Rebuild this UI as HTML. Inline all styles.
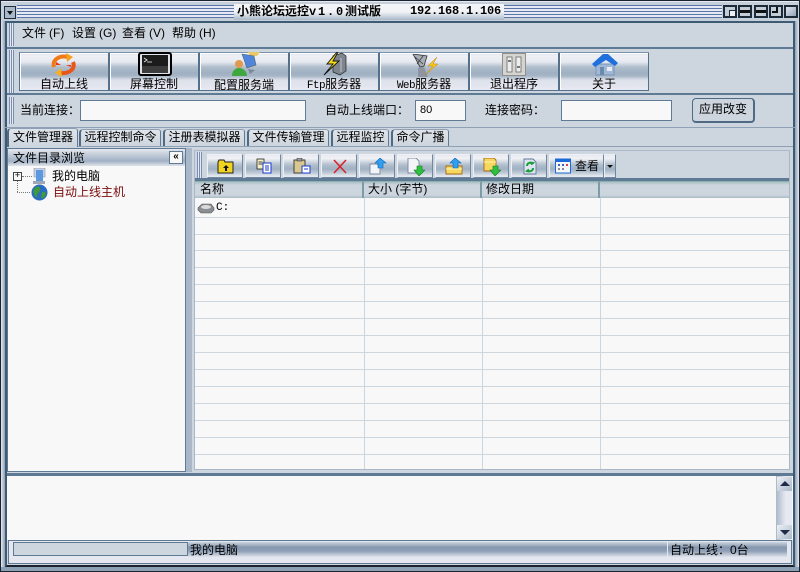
<!DOCTYPE html>
<html><head><meta charset="utf-8"><style>
html,body{margin:0;padding:0;width:800px;height:572px;overflow:hidden;background:#cdd5de}
*{box-sizing:border-box}
body{font:12px/14px "WenQuanYi Zen Hei","Liberation Sans","Noto Sans CJK SC",sans-serif;color:#000;position:relative}
.a{position:absolute}
.t{position:absolute;white-space:nowrap;font-size:12px;line-height:14px}
.btn{position:absolute;top:52px;width:90px;height:39px;background:linear-gradient(#dfe3ec 0,#eef0f6 3px,#e6e9f0 9px,#b0becc 14px,#9fb0c2 20px,#a6b6c6 23px,#dce1ea 27px,#e6e8f2 100%);text-align:center;border:1px solid #54708a;border-left-color:#e6e9f0;border-top-color:#e6e9f0;box-shadow:inset 1px 1px 0 #fff}
.btn::before{content:"";position:absolute;left:-1px;top:-1px;right:-1px;bottom:-1px;border-left:1px solid #54708a;border-top:1px solid #7d93a9}
.btn span{position:absolute;left:0;right:0;top:24px;line-height:14px}
.sb{position:absolute;top:154px;width:36px;height:24px;background:linear-gradient(#e6e8f0 0,#f0f2f6 3px,#e2e6ec 5px,#b0becc 10px,#a0b1c3 14px,#c0ccd8 18px,#e4e7ee 21px);border:1px solid #6f87a0;border-left-color:#eef0f6;border-top-color:#eef0f6}
.sb svg{position:absolute;left:9px;top:3px}
.inp{position:absolute;background:#f8f8f8;border:1px solid #5e7a94}
.tab{position:absolute;top:129px;height:17px;background:linear-gradient(#e0e4ea,#cdd5de);border-left:2px solid #4e6a84;border-top:1px solid #8ea0b4;border-right:1px solid #5e7a94;border-radius:4px 3px 0 0;text-align:center;line-height:15px;white-space:nowrap}
.hd{position:absolute;top:181px;height:17px;background:linear-gradient(#a9c0c4,#cdd5de 3px,#cdd5de 13px,#a9bcc4);border-right:2px solid #7d9ca6;border-top:1px solid #8fb0b0;line-height:15px;padding-left:5px}
.grip{position:absolute;width:3px;background:repeating-linear-gradient(90deg,#7a8fb0 0 1px,#e6e8f2 1px 2px)}
.h{position:absolute;left:195px;width:594px;height:1px;background:#ccd6de}
.v{position:absolute;top:198px;width:1px;height:271px;background:#ccd6de}
.wb{position:absolute;top:5px;width:14px;height:13px;border:2px solid #1d2a38;background:#c3cdd8}
</style></head><body>
<!-- outer frame -->
<div class="a" style="left:0;top:0;width:800px;height:572px;border:1px solid #1a2430;background:#a9b8c8"></div>
<div class="a" style="left:1px;top:1px;width:798px;height:20px;background:#c5cfda;border-top:1px solid #e6e8f2"></div>
<!-- title stripes -->
<div class="a" style="left:17px;top:5px;width:217px;height:13px;background:repeating-linear-gradient(#5a76a8 0 1px,#e6e8f4 1px 3px)"></div>
<div class="a" style="left:504px;top:5px;width:218px;height:13px;background:repeating-linear-gradient(#5a76a8 0 1px,#e6e8f4 1px 3px)"></div>
<div class="a" style="left:234px;top:4px;width:270px;height:16px;background:linear-gradient(#f4f5f8,#f0f2f6 50%,#a9b8c8)"></div>
<div class="t" style="left:237px;top:4px;font-weight:bold">小熊论坛远控<span style="font-family:'Liberation Mono',monospace;letter-spacing:1.8px">v1.0</span>测试版</div>
<div class="t" style="left:410px;top:4px;font-family:'Liberation Mono',monospace;font-weight:bold;font-size:12px;letter-spacing:-.2px">192.168.1.106</div>
<div class="wb" style="left:4px;top:6px;width:12px;height:13px;background:#a9b8c8;border-width:1px"><div class="a" style="left:2px;top:4px;border:3px solid transparent;border-top:4px solid #111;border-bottom:0"></div></div>
<div class="wb" style="left:723px"><div class="a" style="left:4px;top:3px;width:6px;height:6px;background:#eef0f4;border:1px solid #1d2a38;border-right:0;border-bottom:0"></div></div>
<div class="wb" style="left:738px"><div class="a" style="left:0;top:3px;width:10px;height:3px;border-top:2px solid #111;border-bottom:1px solid #111"></div></div>
<div class="wb" style="left:754px"><div class="a" style="left:0;top:3px;width:10px;height:3px;border-top:2px solid #111;border-bottom:1px solid #111"></div></div>
<div class="wb" style="left:769px"><div class="a" style="left:1px;top:0;width:6px;height:6px;border:2px solid #111;border-top:0;border-left:0"></div></div>
<div class="wb" style="left:784px;background:linear-gradient(135deg,#e6e8f2,#8fa2b6)"></div>
<!-- main frame -->
<div class="a" style="left:5px;top:21px;width:790px;height:546px;border:2px solid #3f5a73;border-bottom-color:#1a2430;background:#cdd5de"></div>
<!-- side edges -->
<div class="a" style="left:1px;top:21px;width:4px;height:547px;background:linear-gradient(90deg,#e6e8f2,#8ea0b4)"></div>
<div class="a" style="left:795px;top:21px;width:4px;height:547px;background:linear-gradient(90deg,#8ea0b4,#e6e8f2)"></div>
<div class="a" style="left:1px;top:567px;width:798px;height:4px;background:#8ea0b4"></div>
<!-- menu -->
<div class="grip" style="left:9px;top:23px;height:23px;width:5px"></div>
<div class="t" style="left:22px;top:26px">文件</div><div class="t" style="left:49px;top:26px">(F)</div>
<div class="t" style="left:72px;top:26px">设置</div><div class="t" style="left:99px;top:26px">(G)</div>
<div class="t" style="left:122px;top:26px">查看</div><div class="t" style="left:149px;top:26px">(V)</div>
<div class="t" style="left:172px;top:26px">帮助</div><div class="t" style="left:199px;top:26px">(H)</div>
<div class="a" style="left:7px;top:47px;width:786px;height:2px;background:#5e7a94"></div>
<!-- toolbar -->
<div class="grip" style="left:9px;top:50px;height:43px;width:5px"></div>
<div class="btn" style="left:19px"><span>自动上线</span>
<svg class="a" style="left:31px;top:0" width="26" height="24" viewBox="0 0 26 24"><path d="M3 14C1 7 8 2 17 4" fill="none" stroke="#f07a18" stroke-width="4"/><path d="M15 0l7 4-6 5z" fill="#f6a020"/><path d="M22 9c3 7-4 12-13 11" fill="none" stroke="#e8561a" stroke-width="4"/><path d="M11 24l-7-4 6-5z" fill="#f6b020"/><path d="M5 9l5 3H5zM20 14l-5-2h5z" fill="#e83a18"/></svg></div>
<div class="btn" style="left:109px"><span>屏幕控制</span>
<svg class="a" style="left:28px;top:-1px" width="34" height="24" viewBox="0 0 34 24"><rect x="1" y="1" width="32" height="22" rx="2" fill="#dfe2e8" stroke="#000" stroke-width="2"/><rect x="4" y="3" width="26" height="18" fill="#1c1c1c"/><rect x="4" y="14" width="26" height="7" fill="#3c3c3c"/><path d="M6 6l3 2-3 2" stroke="#ddd" fill="none"/><path d="M9 10h5" stroke="#bbb"/></svg></div>
<div class="btn" style="left:199px"><span style="top:25px">配置服务端</span>
<svg class="a" style="left:31px;top:-1px" width="30" height="25" viewBox="0 0 30 25"><path d="M17 0h12l-3 4H19z" fill="#e8c868"/><path d="M11 2l12 2 2 9-9 3z" fill="#4f86dc" stroke="#566" stroke-width=".6"/><path d="M17 17l7 1-5 4z" fill="#7a8898"/><circle cx="8" cy="12" r="4" fill="#e09a50"/><path d="M1 24c0-5 3-8 7-8s8 3 8 8z" fill="#3ea83e"/></svg></div>
<div class="btn" style="left:289px"><span><span style="position:static;font:11px 'Liberation Mono',monospace;letter-spacing:-.5px">Ftp</span>服务器</span>
<svg class="a" style="left:33px;top:-1px" width="24" height="24" viewBox="0 0 24 24"><path d="M10 4l9-3 4 3v15l-6 4-7-3z" fill="#7f858e" stroke="#222" stroke-width=".7"/><path d="M18 6v14" stroke="#c0c4ca"/><path d="M14 0L4 12h6L1 23 16 9h-6l5-9z" fill="#f8dc18" stroke="#111" stroke-width=".9"/></svg></div>
<div class="btn" style="left:379px"><span><span style="position:static;font:11px 'Liberation Mono',monospace;letter-spacing:-.5px">Web</span>服务器</span>
<svg class="a" style="left:32px;top:1px" width="26" height="24" viewBox="0 0 26 24"><path d="M1 0l14 2-3 10-4 1z" fill="#a8aeb6" stroke="#333" stroke-width=".8"/><path d="M3 3l8 7M11 2l-6 8" stroke="#333" stroke-width=".7"/><path d="M6 14l6-1 4 10H6z" fill="#8d95a0"/><path d="M25 3l-9 9h5l-8 9 13-11h-5z" fill="#f8c818" stroke="#c08020" stroke-width=".5"/></svg></div>
<div class="btn" style="left:469px"><span>退出程序</span>
<svg class="a" style="left:32px;top:0" width="24" height="24" viewBox="0 0 24 24"><rect x=".5" y=".5" width="23" height="22" fill="#d4d4d0" stroke="#908f8c"/><rect x="5" y="4" width="5" height="15" fill="#eee" stroke="#666" stroke-width=".8"/><rect x="14" y="4" width="5" height="15" fill="#eee" stroke="#666" stroke-width=".8"/><path d="M6 8h3M15 14h3" stroke="#333" stroke-width="1.200"/></svg></div>
<div class="btn" style="left:559px"><span>关于</span>
<svg class="a" style="left:32px;top:0" width="26" height="23" viewBox="0 0 26 23"><path d="M4 11v11h18V11z" fill="#a0b8d8" stroke="#6a88b0" stroke-width=".7"/><path d="M0 11L11 1h5l10 9-3 3-9-6-11 7z" fill="#1f70dc"/><rect x="8" y="14" width="4" height="8" fill="#6a8aac"/><rect x="15" y="14" width="5" height="4" fill="#e8eef4"/></svg></div>
<div class="a" style="left:7px;top:93px;width:786px;height:2px;background:#5e7a94"></div>
<!-- connection -->
<div class="grip" style="left:9px;top:97px;height:27px;width:5px"></div>
<div class="t" style="left:20px;top:103px">当前连接：</div>
<div class="inp" style="left:80px;top:100px;width:226px;height:21px"></div>
<div class="t" style="left:325px;top:103px">自动上线端口：</div>
<div class="inp" style="left:415px;top:100px;width:51px;height:21px"></div>
<div class="t" style="left:420px;top:103px;font-family:'Liberation Sans',sans-serif;font-size:11px">80</div>
<div class="t" style="left:485px;top:103px">连接密码：</div>
<div class="inp" style="left:561px;top:100px;width:111px;height:21px"></div>
<div class="a" style="left:692px;top:98px;width:63px;height:25px;border:1px solid #4e6a84;border-right-width:2px;border-bottom-width:2px;border-radius:4px;background:#cdd5de;text-align:center;line-height:21px">应用改变</div>
<div class="a" style="left:5px;top:127px;width:790px;height:1px;background:#8ea0b4"></div>
<!-- tabs -->
<div class="a" style="left:7px;top:146px;width:786px;height:1px;background:#8ea0b4"></div>
<div class="tab" style="left:7px;width:71px;top:128px;height:19px;line-height:17px;background:linear-gradient(#dfe3ea,#cdd5de)">文件管理器</div>
<div class="tab" style="left:79px;width:82px">远程控制命令</div>
<div class="tab" style="left:163px;width:82px">注册表模拟器</div>
<div class="tab" style="left:247px;width:82px">文件传输管理</div>
<div class="tab" style="left:331px;width:58px">远程监控</div>
<div class="tab" style="left:391px;width:58px">命令广播</div>
<!-- left pane -->
<div class="a" style="left:7px;top:148px;width:179px;height:324px;background:#f8f8f8;border:1px solid #5e7a94"></div>
<div class="a" style="left:8px;top:149px;width:177px;height:17px;background:linear-gradient(#e6e8f0,#cdd5de 4px,#a0b0c4 12px,#dfe3ea)"></div>
<div class="t" style="left:13px;top:151px">文件目录浏览</div>
<div class="a" style="left:169px;top:151px;width:14px;height:13px;background:#f8f8f8;border:1px solid #5e7a94;font:bold 10px/10px 'Liberation Sans',sans-serif;text-align:center">«</div>
<div class="a" style="left:13px;top:172px;width:9px;height:9px;border:1px solid #444;background:#f8f8f8;font:9px/7px 'Liberation Mono',monospace;text-align:center">+</div>
<div class="a" style="left:17px;top:181px;width:1px;height:11px;border-left:1px dotted #777"></div>
<div class="a" style="left:22px;top:176px;width:10px;height:1px;border-top:1px dotted #777"></div>
<div class="a" style="left:17px;top:192px;width:13px;height:1px;border-top:1px dotted #777"></div>
<svg class="a" style="left:31px;top:168px" width="16" height="17" viewBox="0 0 16 17"><rect x="3" y="0" width="11" height="9" fill="#c8d0e0" stroke="#8a98b0" stroke-width=".6"/><path d="M5 2h7v12H5z" fill="#5a98e0"/><path d="M2 13h12v3H2z" fill="#a0a8b8"/></svg>
<div class="t" style="left:52px;top:169px">我的电脑</div>
<svg class="a" style="left:31px;top:184px" width="17" height="17" viewBox="0 0 17 17"><circle cx="8.500" cy="8.500" r="8" fill="#2a6cc0"/><path d="M3 5c3-4 7-3 6 1S6 8 6 12 1 9 3 5zM11 8c3-1 5 1 3 4s-3 3-4 1z" fill="#3f9a3a"/></svg>
<div class="t" style="left:53px;top:185px;color:#7b0c0c">自动上线主机</div>
<!-- splitter -->
<div class="a" style="left:186px;top:148px;width:6px;height:324px;background:#a9b8c8"></div>
<!-- right pane -->
<div class="a" style="left:194px;top:150px;width:596px;height:320px;border:1px solid #a9b8c8;background:#f8f8f8"></div>
<div class="a" style="left:195px;top:151px;width:594px;height:28px;background:#cdd5de"></div>
<div class="grip" style="left:197px;top:152px;height:26px;width:5px"></div>
<div class="sb" style="left:207px"><svg width="18" height="18" viewBox="0 0 18 18"><path d="M1 4l1-2h5l1 2h8v11H1z" fill="#f2d420" stroke="#222" stroke-width="1"/><path d="M6 10l3-3 3 3h-2v3H8v-3z" fill="#111"/></svg></div>
<div class="sb" style="left:245px"><svg width="18" height="18" viewBox="0 0 18 18"><rect x="2" y="1" width="7" height="10" fill="#f4f0c8" stroke="#222" stroke-width=".8"/><path d="M3.500 4h4M3.500 6h4" stroke="#444"/><rect x="8" y="5" width="8" height="10" fill="#fff" stroke="#1a3ad0"/><path d="M10 8h4M10 10h4M10 12h4" stroke="#1a3ad0"/></svg></div>
<div class="sb" style="left:283px"><svg width="18" height="18" viewBox="0 0 18 18"><rect x="1" y="2" width="11" height="13" fill="#d8c890" stroke="#333" stroke-width=".9"/><rect x="4" y="0" width="5" height="3" fill="#999" stroke="#222" stroke-width=".5"/><rect x="9" y="8" width="8" height="7" fill="#fff" stroke="#1a3ad0"/><path d="M11 11h4" stroke="#1a3ad0"/></svg></div>
<div class="sb" style="left:321px"><svg width="18" height="18" viewBox="0 0 18 18"><path d="M3 2l12 13M15 2L3 15" stroke="#d8242c" stroke-width="1.600"/></svg></div>
<div class="sb" style="left:359px"><svg width="18" height="18" viewBox="0 0 18 18"><path d="M1 6h7l3 3v7H1z" fill="#f2f4f8" stroke="#7a8aa0" stroke-width=".9"/><path d="M11 0l6 5h-3v5H9V5H6z" fill="#2ea0f0" stroke="#1060b0" stroke-width=".6"/></svg></div>
<div class="sb" style="left:397px"><svg width="18" height="18" viewBox="0 0 18 18"><path d="M1 0h8l3 3v12H1z" fill="#f2f4f8" stroke="#7a8aa0" stroke-width=".9"/><path d="M12 18l6-6h-3V8h-5v4H7z" fill="#30c040" stroke="#0f7a20" stroke-width=".6"/></svg></div>
<div class="sb" style="left:435px"><svg width="18" height="18" viewBox="0 0 18 18"><path d="M1 8h16v8H1z" fill="#f6d860" stroke="#a86818" stroke-width=".9"/><path d="M1 11h16" stroke="#fff2b0"/><path d="M10 0l6 5h-3v5H8V5H5z" fill="#2ea0f0" stroke="#1060b0" stroke-width=".6"/></svg></div>
<div class="sb" style="left:473px"><svg width="18" height="18" viewBox="0 0 18 18"><path d="M1 0h10l2 2v11H1z" fill="#f6d860" stroke="#a86818" stroke-width=".9"/><path d="M1 4h12" stroke="#fff2b0"/><path d="M12 18l6-6h-3V8h-5v4H7z" fill="#30c040" stroke="#0f7a20" stroke-width=".6"/></svg></div>
<div class="sb" style="left:511px"><svg width="18" height="18" viewBox="0 0 18 18"><path d="M3 1h9l3 3v12H3z" fill="#dfe5f0" stroke="#5f7898" stroke-width=".9"/><path d="M6 8c0-3 3-4 6-3l-2 1.500M12 10c0 3-3 4-6 3l2-1.500" stroke="#18a038" stroke-width="2" fill="none"/></svg></div>
<div class="sb" style="left:549px;width:55px"><svg style="left:5px;top:2px" width="16" height="18" viewBox="0 0 16 18"><rect x=".5" y="2" width="15" height="14" fill="#f4f6fa" stroke="#1a6ad8"/><rect x="1" y="2" width="14" height="3" fill="#1a6ad8"/><path d="M3 7h2v2H3zM7 7h2v2H7z" fill="#4060c0"/><path d="M11 7h2v2h-2z" fill="#d04040"/><path d="M3 11h2v2H3zM7 11h2v2H7z" fill="#889"/></svg><span class="t" style="left:25px;top:4px">查看</span></div>
<div class="sb" style="left:604px;width:12px"><div class="a" style="left:2px;top:10px;border:3px solid transparent;border-top:3px solid #111;border-bottom:0"></div></div>
<div class="a" style="left:195px;top:178px;width:594px;height:3px;background:#5e7a94"></div>
<!-- headers -->
<div class="hd" style="left:195px;width:169px">名称</div>
<div class="hd" style="left:364px;width:118px;padding-left:4px">大小 (字节)</div>
<div class="hd" style="left:482px;width:118px;padding-left:4px">修改日期</div>
<div class="hd" style="left:600px;width:189px;border-right:none"></div>
<!-- grid -->
<div class="h" style="top:217px"></div><div class="h" style="top:234px"></div><div class="h" style="top:250px"></div><div class="h" style="top:267px"></div><div class="h" style="top:284px"></div><div class="h" style="top:301px"></div><div class="h" style="top:318px"></div><div class="h" style="top:335px"></div><div class="h" style="top:352px"></div><div class="h" style="top:369px"></div><div class="h" style="top:386px"></div><div class="h" style="top:403px"></div><div class="h" style="top:420px"></div><div class="h" style="top:437px"></div><div class="h" style="top:454px"></div>
<div class="v" style="left:364px"></div><div class="v" style="left:482px"></div><div class="v" style="left:600px"></div>
<svg class="a" style="left:197px;top:202px" width="18" height="12" viewBox="0 0 18 12"><path d="M1 6l4-4h9l3 4v2l-3 3H4L1 8z" fill="#8a8e92" stroke="#555" stroke-width=".6"/><ellipse cx="9" cy="5" rx="5" ry="2" fill="#d8dadc"/></svg>
<div class="t" style="left:216px;top:201px;font-family:'Liberation Mono',monospace;font-size:11px">C:</div>
<!-- divider -->
<div class="a" style="left:7px;top:473px;width:786px;height:3px;background:#5e7a94"></div>
<!-- log area -->
<div class="a" style="left:7px;top:476px;width:786px;height:64px;background:#f8f8f8"></div>
<div class="a" style="left:776px;top:476px;width:16px;height:64px;background:linear-gradient(90deg,#a9b8c8,#e6e8f2 60%)"></div>
<div class="a" style="left:777px;top:477px;width:15px;height:14px;background:linear-gradient(135deg,#eef0f6,#a9b8c8)"><div class="a" style="left:3px;top:4px;border:5px solid transparent;border-bottom:5px solid #1d2a48;border-top:0"></div></div>
<div class="a" style="left:777px;top:525px;width:15px;height:14px;background:linear-gradient(135deg,#eef0f6,#a9b8c8)"><div class="a" style="left:3px;top:5px;border:5px solid transparent;border-top:5px solid #1d2a48;border-bottom:0"></div></div>
<!-- status -->
<div class="a" style="left:8px;top:540px;width:784px;height:24px;border:1px solid #5e7a94;background:#e4e6f0"></div>
<div class="a" style="left:188px;top:542px;width:479px;height:15px;background:linear-gradient(#cdd5de,#8698b0 35%,#8e9fb6 60%,#c0cad6 85%,#e0e3ec)"></div>
<div class="a" style="left:668px;top:542px;width:119px;height:15px;background:linear-gradient(#cdd5de,#8698b0 35%,#8e9fb6 60%,#c0cad6 85%,#e0e3ec)"></div>
<div class="a" style="left:13px;top:542px;width:175px;height:14px;border:1px solid #5e7a94;background:#cdd5de"></div>
<div class="t" style="left:190px;top:543px">我的电脑</div>
<div class="t" style="left:670px;top:543px">自动上线：0台</div>
</body></html>
